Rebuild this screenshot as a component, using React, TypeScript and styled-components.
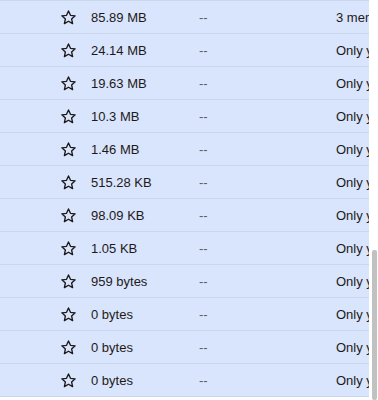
import React from "react";
import styled, { createGlobalStyle } from "styled-components";

const Global = createGlobalStyle`
  html, body { margin: 0; padding: 0; background: #ffffff; }
  body { font-family: "Liberation Sans", Arial, sans-serif; }
`;

const Frame = styled.div`
  display: flex;
  width: 378px;
  height: 400px;
  overflow: hidden;
`;

const List = styled.div`
  width: 369px;
  display: flex;
  flex-direction: column;
  flex: none;
`;

const Row = styled.div`
  display: grid;
  grid-template-columns: 60px 31px 108px 137px 1fr;
  align-items: center;
  height: 32px;
  border-top: 1px solid #c9d6ec;
  background: #d8e5fc;
  overflow: hidden;
  white-space: nowrap;
  font-size: 13px;
  color: #1e1919;
  &:last-child { border-bottom: 1px solid #c9d6ec; }
`;

const Cell = styled.div<{ $muted?: boolean }>`
  overflow: hidden;
  color: ${(p) => (p.$muted ? "#5f5f5f" : "#1e1919")};
`;

const StarCell = styled.div`
  display: flex;
  align-items: center;
  height: 100%;
`;

const Track = styled.div`
  width: 9px;
  flex: none;
  display: flex;
  flex-direction: column;
  padding-top: 250px;
  box-sizing: border-box;
`;

const Thumb = styled.div`
  margin-left: 3px;
  width: 5px;
  flex: 1;
  background: #c1c1c1;
  border-radius: 2px;
`;

const Star = () => (
  <svg width="17" height="17" viewBox="0 0 24 24" fill="none" stroke="#1e1919" strokeWidth="1.9" strokeLinejoin="round">
    <path d="M12 2.8l2.8 6.1 6.6.7-5 4.5 1.4 6.6L12 17.3l-5.8 3.4 1.4-6.6-5-4.5 6.6-.7z" />
  </svg>
);

const rows = [
  { size: "85.89 MB", who: "3 members" },
  { size: "24.14 MB", who: "Only you" },
  { size: "19.63 MB", who: "Only you" },
  { size: "10.3 MB", who: "Only you" },
  { size: "1.46 MB", who: "Only you" },
  { size: "515.28 KB", who: "Only you" },
  { size: "98.09 KB", who: "Only you" },
  { size: "1.05 KB", who: "Only you" },
  { size: "959 bytes", who: "Only you" },
  { size: "0 bytes", who: "Only you" },
  { size: "0 bytes", who: "Only you" },
  { size: "0 bytes", who: "Only you" },
];

export default function App() {
  return (
    <>
      <Global />
      <Frame>
        <List>
          {rows.map((r, i) => (
            <Row key={i}>
              <span />
              <StarCell>
                <Star />
              </StarCell>
              <Cell>{r.size}</Cell>
              <Cell $muted>--</Cell>
              <Cell>{r.who}</Cell>
            </Row>
          ))}
        </List>
        <Track>
          <Thumb />
        </Track>
      </Frame>
    </>
  );
}
